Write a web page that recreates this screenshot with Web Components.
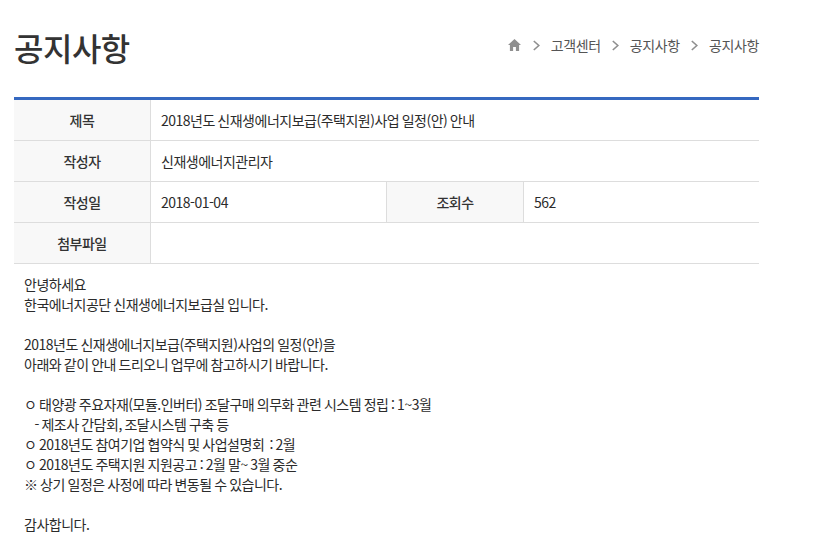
<!DOCTYPE html>
<html lang="ko">
<head>
<meta charset="utf-8">
<title>공지사항</title>
<style>
  html, body { margin: 0; background: #fff; overflow: hidden; }
  body { font-family: "Noto Sans CJK KR", "Noto Sans", sans-serif; color: #333; }
</style>
</head>
<body>
<notice-page>
  <page-header title="공지사항"></page-header>
  <notice-table></notice-table>
  <notice-body>안녕하세요
한국에너지공단 신재생에너지보급실 입니다.

2018년도 신재생에너지보급(주택지원)사업의 일정(안)을
아래와 같이 안내 드리오니 업무에 참고하시기 바랍니다.

ㅇ 태양광 주요자재(모듈.인버터) 조달구매 의무화 관련 시스템 정립 : 1~3월
    - 제조사 간담회, 조달시스템 구축 등
ㅇ 2018년도 참여기업 협약식 및 사업설명회  : 2월
ㅇ 2018년도 주택지원 지원공고 : 2월 말~ 3월 중순
※ 상기 일정은 사정에 따라 변동될 수 있습니다.

감사합니다.</notice-body>
</notice-page>
<script>
class NoticePage extends HTMLElement {
  constructor() {
    super();
    this.attachShadow({ mode: "open" }).innerHTML = `
      <style>
        :host { display: block; width: 745px; margin-left: 14px; }
      </style>
      <slot></slot>`;
  }
}

class PageHeader extends HTMLElement {
  constructor() {
    super();
    const chevron = `<svg width="7" height="11" viewBox="0 0 7 11"><path d="M.8 1 5.8 5.5 .8 10" fill="none" stroke="#8f8f8f" stroke-width="1.6"/></svg>`;
    this.attachShadow({ mode: "open" }).innerHTML = `
      <style>
        :host { display: flex; justify-content: space-between; align-items: flex-start; height: 97px; }
        h2 { margin: 22px 0 0; font-size: 32px; line-height: 50px; font-weight: 500; color: #333; letter-spacing: -0.5px; }
        nav { display: flex; align-items: center; gap: 11px; margin-top: 35px; height: 20px; font-size: 14px; line-height: 20px; color: #555; letter-spacing: -0.35px; }
        svg { display: block; }
        .home { margin-right: 1px; }
      </style>
      <h2></h2>
      <nav>
        <svg class="home" width="13" height="12" viewBox="0 0 13 12"><path d="M6.5 0 0 6h1.9v6h3.2V8h2.8v4h3.2V6H13z" fill="#8f8f8f"/></svg>
        ${chevron}<span>고객센터</span>
        ${chevron}<span>공지사항</span>
        ${chevron}<span>공지사항</span>
      </nav>`;
    this.shadowRoot.querySelector("h2").textContent = this.getAttribute("title");
  }
}

class NoticeTable extends HTMLElement {
  constructor() {
    super();
    const rows = [
      [["제목", "2018년도 신재생에너지보급(주택지원)사업 일정(안) 안내"]],
      [["작성자", "신재생에너지관리자"]],
      [["작성일", "2018-01-04"], ["조회수", "562"]],
      [["첨부파일", ""]]
    ];
    const html = rows.map((row) => {
      const cells = row.map(([label, value]) =>
        `<div class="th">${label}</div><div class="td">${value}</div>`).join("");
      return `<div class="row ${row.length > 1 ? "split" : ""}">${cells}</div>`;
    }).join("");
    this.attachShadow({ mode: "open" }).innerHTML = `
      <style>
        :host { display: block; border-top: 3px solid #3568c0; font-size: 14px; letter-spacing: -0.5px; word-spacing: -0.9px; }
        .row { display: grid; grid-template-columns: 137px 1fr; height: 41px; box-sizing: border-box; border-bottom: 1px solid #ddd; }
        .row.split { grid-template-columns: 137px 236px 137px 1fr; }
        .th, .td { display: flex; align-items: center; box-sizing: border-box; border-right: 1px solid #ddd; }
        .th { justify-content: center; background: #f8f8f8; font-weight: 500; color: #333; }
        .td { padding-left: 10px; color: #2b2b2b; }
        .td:last-child { border-right: 0; }
      </style>
      ${html}`;
  }
}

class NoticeBody extends HTMLElement {
  constructor() {
    super();
    this.attachShadow({ mode: "open" }).innerHTML = `
      <style>
        :host { display: block; padding: 10px 10px 0; font-size: 14px; line-height: 20px; color: #2b2b2b; letter-spacing: -0.5px; word-spacing: -0.8px; }
        div { white-space: pre-wrap; }
      </style>
      <div><slot></slot></div>`;
  }
}

customElements.define("notice-page", NoticePage);
customElements.define("page-header", PageHeader);
customElements.define("notice-table", NoticeTable);
customElements.define("notice-body", NoticeBody);
</script>
</body>
</html>
